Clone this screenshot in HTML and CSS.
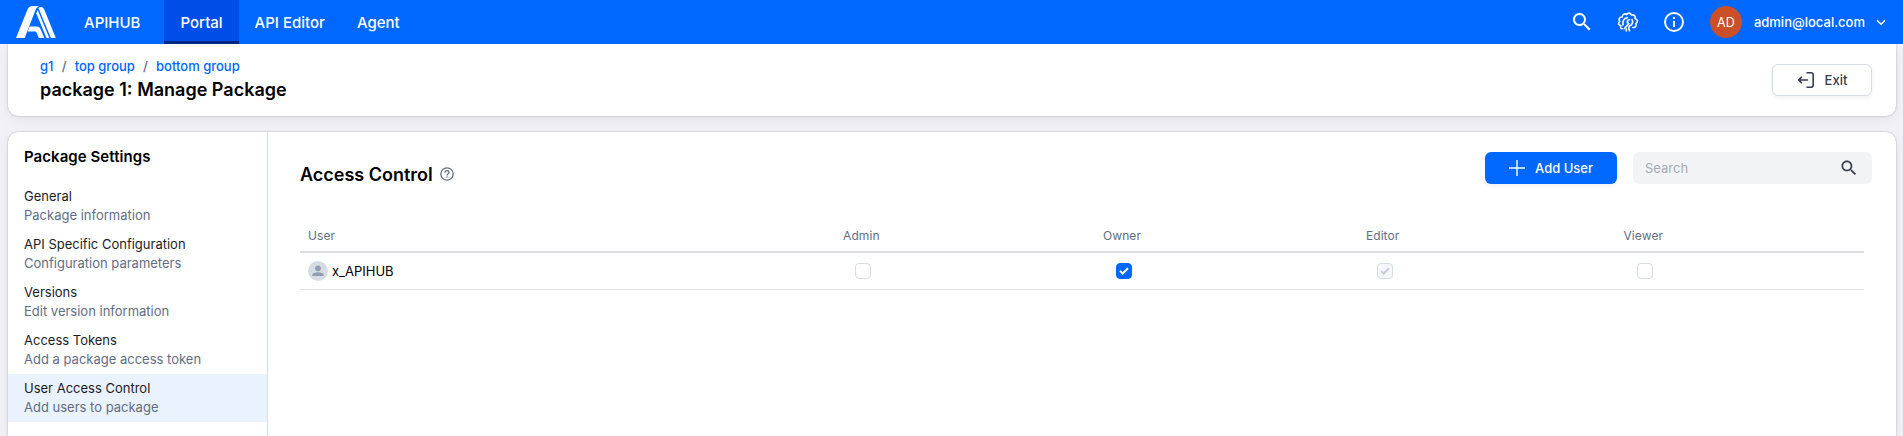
FILE: index.html
```html
<!DOCTYPE html>
<html lang="en">
<head>
<meta charset="utf-8">
<title>Manage Package</title>
<link rel="stylesheet" href="styles.css">
</head>
<body>
<header class="appbar">
  <svg class="logo" width="40" height="32" viewBox="0 0 40 32" fill="#fff">
    <path d="M0 32 11.2 4.2C12.4 1.2 14 0 16.800 0H23.200C21.200 .8 20.200 2.200 19.200 4.700L8.700 32Z"/>
    <path d="M13.600 20.600H20.500C23.300 20.600 24.300 22.300 25.100 24.200L28.300 32H22.800L20.700 26.800C20.300 25.900 19.700 25.500 18.700 25.500H11.800Z"/>
    <path d="M20.300 7.200 30.400 32H33.300L21.700 4.100Z"/>
    <path d="M22.500 2.200C23.200 1.200 24.200 .8 25.500 1.100C27.500 1.500 28.200 3.300 28.900 5L39.800 32H34.900Z"/>
  </svg>
  <nav class="tabs">
    <a class="tab tab-home">APIHUB</a>
    <a class="tab tab-active">Portal</a>
    <a class="tab">API Editor</a>
    <a class="tab">Agent</a>
  </nav>
  <div class="tools">
    <svg class="tool-search" width="24" height="24" viewBox="0 0 24 24" fill="#fff"><path d="M15.500 14h-.79l-.28-.27C15.410 12.590 16 11.110 16 9.500 16 5.910 13.090 3 9.500 3S3 5.910 3 9.500 5.910 16 9.500 16c1.610 0 3.090-.59 4.230-1.570l.27.28v.79l5 4.990L20.490 19l-4.990-5zm-6 0C7.010 14 5 11.990 5 9.500S7.010 5 9.500 5 14 7.010 14 9.500 11.990 14 9.500 14z"/></svg>
    <svg class="tool-gear" width="22" height="22" viewBox="0 0 22 22" fill="none" stroke="#fff" stroke-width="1.600" stroke-linejoin="round" stroke-linecap="round">
      <path d="M5.600 17.700C3.900 18.100 3.100 16.800 3.900 14.600 1.500 14.200 .7 12.200 2.700 10.500 1.300 8.200 2.200 5.900 5.200 6 5.500 3.200 7.500 2.100 9.500 3.600 11 1.500 13.600 1.600 14.500 4 17.200 3.500 18.800 4.900 18 7.500 21 8.500 21.200 11.200 18.800 12.500 20 15 18.600 16.800 15.800 16.500"/>
      <path d="M7.500 17.500 11.800 12.600 10.200 11.300 10.700 9.300 12.500 8.800"/>
      <path d="M6 14C5.400 10.500 7 7.500 10.300 6.600"/>
      <path d="M15 8.500C16.400 11.200 15.200 13.900 12.600 14.900L11.600 17 12.500 19.800M9.300 18V20"/>
    </svg>
    <svg class="tool-info" width="20" height="20" viewBox="0 0 20 20"><circle cx="10" cy="10" r="9" fill="none" stroke="#fff" stroke-width="1.900"/><path d="M9 5h2v2H9zM9 9h2v6H9z" fill="#fff"/></svg>
    <span class="avatar">AD</span>
    <span class="account">admin@local.com</span>
    <svg class="chevron" width="10" height="7" viewBox="0 0 10 7" fill="none" stroke="#fff" stroke-width="1.500"><path d="M1 1.200 5 5.200 9 1.200"/></svg>
  </div>
</header>

<section class="card package-head">
  <div>
    <div class="crumbs"><a>g1</a><span>/</span><a>top group</a><span>/</span><a>bottom group</a></div>
    <h1 class="title">package 1: Manage Package</h1>
  </div>
  <button class="btn btn-exit">
    <svg width="18" height="18" viewBox="0 0 18 18" fill="none" stroke="#353c4e" stroke-width="1.600"><path d="M9.500 1.800H14Q16.200 1.800 16.200 4V14Q16.200 16.200 14 16.200H9.500M11 9H2M4.800 5.900 1.700 9 4.800 12.100"/></svg>
    Exit
  </button>
</section>

<main class="card workspace">
  <aside class="sidebar">
    <h2 class="sidebar-title">Package Settings</h2>
    <a class="item"><span class="item-name">General</span><span class="item-note">Package information</span></a>
    <a class="item"><span class="item-name">API Specific Configuration</span><span class="item-note">Configuration parameters</span></a>
    <a class="item"><span class="item-name">Versions</span><span class="item-note">Edit version information</span></a>
    <a class="item"><span class="item-name">Access Tokens</span><span class="item-note">Add a package access token</span></a>
    <a class="item item-selected"><span class="item-name">User Access Control</span><span class="item-note">Add users to package</span></a>
  </aside>
  <section class="content">
    <div class="toolbar">
      <h2 class="heading">Access Control</h2>
      <svg class="help" width="14" height="14" viewBox="0 0 14 14" fill="none" stroke="#626d82" stroke-width="1.300"><circle cx="7" cy="7" r="6.200"/><path d="M5 5.700C5 4.500 5.900 3.700 7 3.700S9 4.500 9 5.500C9 6.800 7 6.900 7 8.500M7 9.500V10.800"/></svg>
      <button class="btn btn-add">
        <svg width="16" height="16" viewBox="0 0 16 16" stroke="#fff" stroke-width="1.400"><path d="M8 0V16M0 8H16"/></svg>
        Add User
      </button>
      <div class="search">
        <span>Search</span>
        <svg width="20" height="20" viewBox="0 0 24 24" fill="#353c4e"><path d="M15.500 14h-.79l-.28-.27C15.410 12.590 16 11.110 16 9.500 16 5.910 13.090 3 9.500 3S3 5.910 3 9.500 5.910 16 9.500 16c1.610 0 3.090-.59 4.230-1.570l.27.28v.79l5 4.990L20.490 19l-4.990-5zm-6 0C7.010 14 5 11.990 5 9.500S7.010 5 9.500 5 14 7.010 14 9.500 11.990 14 9.500 14z"/></svg>
      </div>
    </div>
    <div class="table">
      <div class="row row-head"><span class="cell-user">User</span><span>Admin</span><span>Owner</span><span>Editor</span><span>Viewer</span></div>
      <div class="row row-body">
        <span class="cell-user">
          <svg width="20" height="20" viewBox="0 0 20 20"><circle cx="10" cy="10" r="10" fill="#d5dce3"/><circle cx="10" cy="7.300" r="2.900" fill="#8f9eb4"/><path d="M4.300 15V14C4.300 12.200 7.500 11.200 10 11.200S15.700 12.200 15.700 14V15Z" fill="#8f9eb4"/></svg>
          x_APIHUB
        </span>
        <span class="box"></span>
        <span class="box box-on"><svg width="10" height="8" viewBox="0 0 10 8" fill="none" stroke="currentColor" stroke-width="2"><path d="M1 3.900 3.700 6.500 9 1.200"/></svg></span>
        <span class="box box-off"><svg width="10" height="8" viewBox="0 0 10 8" fill="none" stroke="currentColor" stroke-width="2"><path d="M1 3.900 3.700 6.500 9 1.200"/></svg></span>
        <span class="box"></span>
      </div>
    </div>
  </section>
</main>
</body>
</html>
```
FILE: styles.css
```css
* { box-sizing: border-box; }
body {
  margin: 0;
  height: 436px;
  overflow: hidden;
  background: #f2f1f7;
  font-family: Inter, "Liberation Sans", sans-serif;
  font-size: 13px;
  color: #000;
  display: flex;
  flex-direction: column;
}
h1, h2 { margin: 0; }
svg { display: block; flex: none; }

.appbar {
  height: 44px;
  flex: none;
  display: flex;
  align-items: center;
  background: #0068ff;
  color: #fff;
  padding: 0 17px 0 16px;
}
.logo { margin-right: 12px; }
.tabs { display: flex; height: 44px; }
.tab {
  padding: 0 16px;
  line-height: 45px;
  font-size: 15px;
  font-weight: 500;
}
.tab-home { margin-right: 8px; }
.tab-active { background: #004ee8; box-shadow: inset 0 -3px #002a82; }
.tools { display: flex; align-items: center; margin-left: auto; }
.tool-gear { margin-left: 23px; }
.tool-info { margin-left: 25px; }
.avatar {
  width: 32px;
  height: 32px;
  margin-left: 26px;
  border-radius: 50%;
  background: #cb4f27;
  font-size: 12.5px;
  line-height: 33px;
  text-align: center;
}
.account { margin-left: 12px; font-weight: 500; }
.chevron { margin-left: 11px; }

.card {
  margin: 0 7px 0 8px;
  background: #fff;
  box-shadow: 0 0 2px rgba(4, 10, 21, .3), 0 4px 12px rgba(4, 10, 21, .06);
}
.package-head {
  height: 72px;
  flex: none;
  clip-path: inset(0 -16px -20px -16px);
  display: flex;
  justify-content: space-between;
  padding: 12px 24px 0 32px;
  border-radius: 0 0 10px 10px;
}
.crumbs { display: flex; line-height: 20px; font-weight: 500; color: #626d82; }
.crumbs a { color: #0068ff; }
.crumbs span { margin: 0 8.200px; }
.title { font-size: 18px; line-height: 24px; font-weight: 600; margin-top: 2px; }
.btn {
  height: 32px;
  display: flex;
  align-items: center;
  justify-content: center;
  border: 0;
  border-radius: 6px;
  font: 500 13px/32px Inter, sans-serif;
  gap: 10px;
  padding: 0;
  box-shadow: 0 2px 4px rgba(4, 10, 21, .06);
}
.btn-exit { width: 100px; margin-top: 8px; background: #fff; color: #353c4e; border: 1px solid #d5dce3; }
.btn-add { width: 132px; margin-left: auto; background: #0068ff; color: #fff; }

.workspace { display: flex; flex: 1; margin-top: 16px; border-radius: 10px 10px 0 0; }
.sidebar { width: 260px; border-right: 1px solid #d5dce3; padding-top: 13px; }
.sidebar-title { font-size: 15px; font-weight: 600; line-height: 24px; letter-spacing: .06px; padding-left: 16px; margin-bottom: 13px; }
.item { display: flex; flex-direction: column; height: 48px; padding: 5px 16px 0; line-height: 19px; }
.item-selected { background: #eaf2fe; }
.item-name { color: #1c1c1e; }
.item-note { color: #626d82; }

.content { flex: 1; padding: 20px 24px 0 32px; }
.toolbar { display: flex; align-items: flex-start; height: 72px; }
.heading { font-size: 18px; line-height: 24px; font-weight: 600; margin-top: 11px; }
.help { margin: 15px 0 0 7px; }
.search {
  width: 239px;
  height: 32px;
  margin-left: 16px;
  padding: 0 13px 0 12px;
  display: flex;
  align-items: center;
  justify-content: space-between;
  border-radius: 6px;
  background: #f2f3f5;
  color: #a5abb5;
}
.table { margin-right: 8px; }
.row {
  display: grid;
  grid-template-columns: 433px repeat(4, 260.67px);
  align-items: center;
  justify-items: center;
  border-bottom: 1px solid #dbdde2;
}
.row-head { height: 29px; border-bottom-width: 2px; font-size: 12px; letter-spacing: .08px; color: #626d82; padding-bottom: 4px; }
.row-head > span + span { padding-right: 4px; }
.row-body { height: 37px; }
.cell-user { justify-self: start; display: flex; align-items: center; gap: 4px; padding-left: 8px; }
.box {
  width: 16px;
  height: 16px;
  display: grid;
  place-items: center;
  border: 1px solid #d5dce3;
  border-radius: 4px;
}
.box-on { background: #0068ff; border-color: #0068ff; color: #fff; }
.box-off { background: #f6f7fa; color: #c5cdd8; }
```
